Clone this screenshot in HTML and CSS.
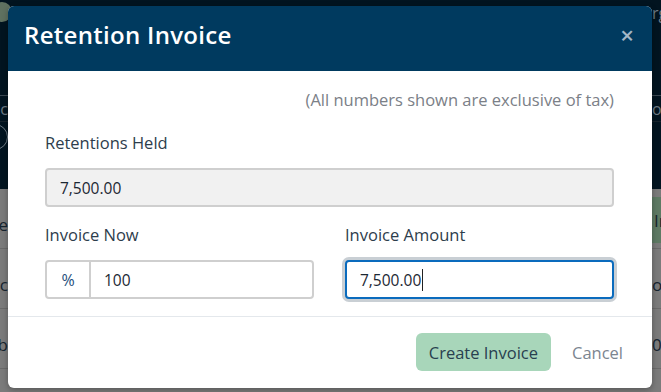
FILE: index.html
```html
<!DOCTYPE html>
<html>
<head>
<meta charset="utf-8">
<link rel="stylesheet" href="styles.css">
</head>
<body>
<div class="page">
  <div class="page-top">
    <div class="avatar"></div>
    <div class="top-line l1"><span class="frag-l">oc</span><span class="frag-r">or</span></div>
    <div class="top-line l2"><span class="ring"></span><span class="frag-r2">rg</span></div>
  </div>
  <div class="page-rows">
    <div class="prow"><span class="cell-l">e</span><span class="cell-r green">In</span></div>
    <div class="prow"><span class="cell-l">c</span><span class="cell-r">o</span></div>
    <div class="prow"><span class="cell-l">b</span><span class="cell-r">0</span></div>
  </div>
</div>

<div class="modal">
  <div class="modal-header">
    <h1 class="modal-title">Retention Invoice</h1>
    <span class="close">&times;</span>
  </div>
  <div class="modal-body">
    <p class="note">(All numbers shown are exclusive of tax)</p>
    <label class="label">Retentions Held</label>
    <div class="input readonly">7,500.00</div>
    <div class="cols">
      <div class="col">
        <label class="label">Invoice Now</label>
        <div class="group">
          <span class="addon">%</span>
          <div class="input grouped">100</div>
        </div>
      </div>
      <div class="col">
        <label class="label">Invoice Amount</label>
        <div class="input focused">7,500.00<span class="caret"></span></div>
      </div>
    </div>
  </div>
  <div class="modal-footer">
    <button class="btn-primary">Create Invoice</button>
    <button class="btn-link">Cancel</button>
  </div>
</div>
</body>
</html>
```

FILE: styles.css
```css
* { box-sizing: border-box; }
html, body { margin: 0; padding: 0; }
body {
  width: 661px;
  height: 392px;
  overflow: hidden;
  font-family: "Open Sans", "Noto Sans", sans-serif;
  position: relative;
  background: #7b7b7b;
}
.page { width: 661px; height: 392px; overflow: hidden; }
.page-top {
  height: 189px;
  background: #021420;
  position: relative;
}
.avatar {
  position: absolute;
  left: -8px; top: 2px;
  width: 20px; height: 20px;
  border-radius: 50%;
  background: #5f7160;
}
.top-line {
  position: absolute;
  left: 0; right: 0;
  height: 27px;
  border-top: 1px solid #3b4852;
  color: #6d7a84;
  font-size: 16px;
}
.l1 { top: 95px; }
.l2 { top: 121px; border-top: 1px solid #17232c; }
.frag-l { position: absolute; left: 0; top: 2px; width: 8px; overflow: hidden; direction: rtl; }
.frag-r { position: absolute; right: 0; top: 2px; width: 9px; overflow: hidden; }
.frag-r2 { position: absolute; right: 0; top: -120px; width: 9px; overflow: hidden; }
.ring {
  position: absolute; left: -18px; top: 2px;
  width: 26px; height: 26px; border-radius: 50%;
  border: 1px solid #6d7a84;
}
.page-rows { background: #7b7b7b; }
.prow {
  height: 60px;
  border-bottom: 1px solid #6a6a6a;
  position: relative;
  color: #16242f;
  font-size: 17px;
}
.cell-l { position: absolute; left: 0; top: 24px; width: 8px; overflow: hidden; direction: rtl; }
.cell-r { position: absolute; right: 0; top: 24px; width: 9px; overflow: hidden; }
.cell-r.green {
  top: 8px; height: 46px; width: 9px;
  background: #5e7a64; padding: 12px 0 0 2px;
}

.modal {
  position: absolute;
  left: 8px; top: 6px;
  width: 644px; height: 382px;
  background: #fff;
  border-radius: 6px;
  overflow: hidden;
  box-shadow: 0 2px 6px rgba(0,0,0,0.3);
}
.modal-header {
  height: 65px;
  background: #003a5f;
  display: flex;
  align-items: center;
  justify-content: space-between;
  padding: 0 18px 8px 16px;
}
.modal-title {
  margin: 0;
  color: #fff;
  font-size: 24px;
  font-weight: 600;
  letter-spacing: 0.3px;
}
.close {
  color: #a3b6c6;
  font-size: 24px;
  font-weight: 600;
  line-height: 1;
}
.modal-body {
  padding: 19px 38px 17px 37px;
  border-bottom: 1px solid #e4e8ec;
}
.note {
  margin: 0 0 23px;
  text-align: right;
  color: #7b8087;
  font-size: 16.5px;
  line-height: 20px;
}
.label {
  display: block;
  color: #2d3d4c;
  font-size: 16.5px;
  line-height: 20px;
  margin-bottom: 15px;
}
.input {
  height: 39px;
  border: 2px solid #cfcfcf;
  border-radius: 4px;
  padding: 0 13px;
  display: flex;
  align-items: center;
  font-size: 15.5px;
  color: #1c2833;
  background: #fff;
}
.readonly { background: #f1f1f1; margin-bottom: 18px; }
.cols {
  display: grid;
  grid-template-columns: 1fr 1fr;
  column-gap: 31px;
}
.group {
  display: flex;
  height: 39px;
  border: 2px solid #cfcfcf;
  border-radius: 4px;
}
.addon {
  width: 44px;
  display: flex;
  align-items: center;
  justify-content: center;
  border-right: 2px solid #cfcfcf;
  color: #1e4f7c;
  font-size: 16px;
}
.input.grouped {
  flex: 1;
  height: 35px;
  border: none;
  padding-left: 13px;
}
.input.focused {
  border: 2px solid #0a6bbd;
  box-shadow: 0 0 0 3px #c9cfd4;
  padding-left: 13px;
}
.caret {
  display: inline-block;
  width: 1px; height: 22px;
  background: #222;
  margin-left: 1px;
}
.modal-footer {
  display: flex;
  justify-content: flex-end;
  align-items: flex-start;
  padding: 16px 29px 0 0;
  gap: 21px;
}
.btn-primary {
  height: 38px;
  padding: 0 13px;
  background: #a8d6ba;
  border: none;
  border-radius: 6px;
  color: #28404f;
  font-family: inherit;
  font-size: 16.5px;
}
.btn-link {
  height: 38px;
  padding: 0;
  background: none;
  border: none;
  color: #7b8590;
  font-family: inherit;
  font-size: 16.5px;
}
```
